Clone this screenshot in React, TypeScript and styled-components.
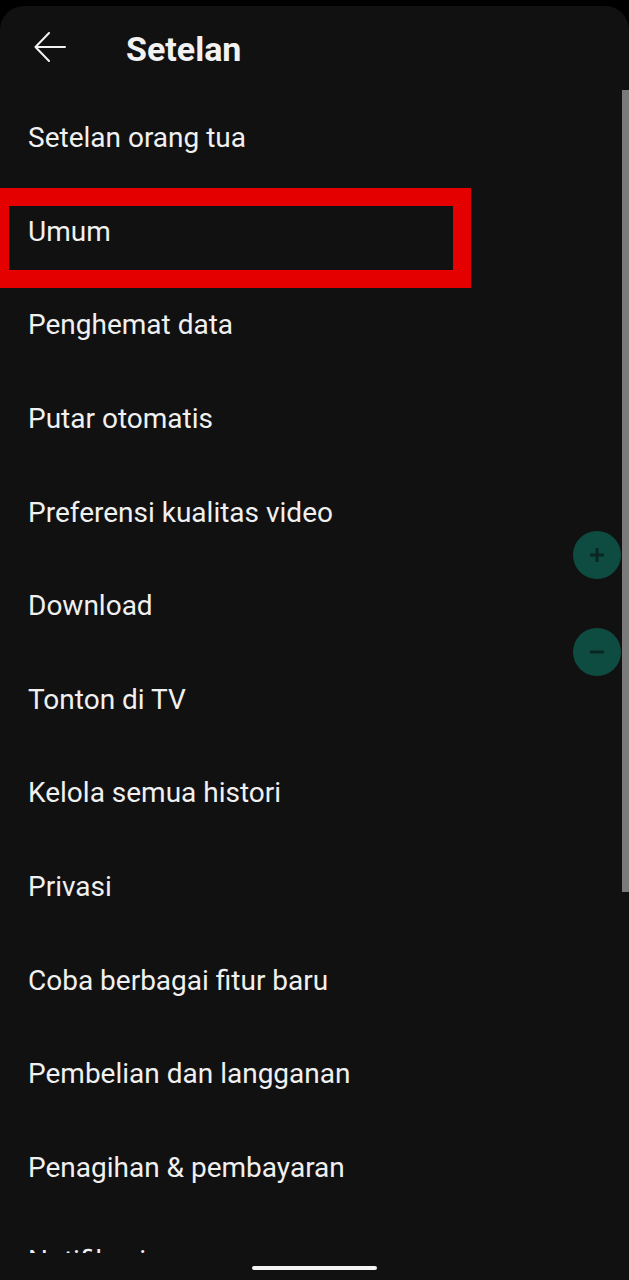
import styled, { createGlobalStyle } from "styled-components";

const GlobalStyle = createGlobalStyle`
  * {
    box-sizing: border-box;
  }
  body {
    margin: 0;
    background: #000;
    font-family: Roboto, "Noto Sans", "Liberation Sans", sans-serif;
  }
`;

const Screen = styled.div`
  position: relative;
  width: 629px;
  height: 1280px;
  padding-top: 6px;
  background: #000;
  overflow: hidden;
`;
const Sheet = styled.div`
  position: relative;
  display: flex;
  flex-direction: column;
  height: 1274px;
  background: #111111;
  border-radius: 24px 24px 0 0;
`;
const Header = styled.header`
  display: flex;
  align-items: center;
  height: 85px;
  padding: 0 0 4px 34px;
`;
const BackButton = styled.button`
  display: flex;
  align-items: center;
  justify-content: center;
  width: 32px;
  height: 30px;
  padding: 0;
  border: none;
  background: none;
  color: #f2f2f2;
`;
const Title = styled.h1`
  margin: 4px 0 0 60px;
  font-size: 34px;
  font-weight: 700;
  color: #f2f2f2;
`;
const List = styled.ul`
  flex: 1;
  margin: 0;
  padding: 0;
  list-style: none;
  overflow: hidden;
`;
const Row = styled.li`
  position: relative;
  display: flex;
  align-items: center;
  height: 93.6px;
  padding-left: 28px;
  font-size: 28px;
  color: #f0f0f0;
`;
const Highlight = styled.div`
  position: absolute;
  top: 3px;
  left: -9px;
  width: 480px;
  height: 100px;
  border: 18px solid #e50000;
  pointer-events: none;
`;
const NavArea = styled.div`
  display: flex;
  justify-content: center;
  height: 27px;
  padding-top: 13px;
`;
const HomeBar = styled.div`
  width: 125px;
  height: 4px;
  border-radius: 2px;
  background: #f5f5f5;
`;
const Scrollbar = styled.div`
  position: absolute;
  top: 84px;
  right: 0;
  width: 7px;
  height: 802px;
  background: #7a7a7a;
`;
const ZoomButton = styled.div<{ $top: number }>`
  position: absolute;
  top: ${(p) => p.$top}px;
  left: 573px;
  display: flex;
  align-items: center;
  justify-content: center;
  width: 48px;
  height: 48px;
  border-radius: 50%;
  background: #0e4c42;
`;

const items = [
  "Setelan orang tua",
  "Umum",
  "Penghemat data",
  "Putar otomatis",
  "Preferensi kualitas video",
  "Download",
  "Tonton di TV",
  "Kelola semua histori",
  "Privasi",
  "Coba berbagai fitur baru",
  "Pembelian dan langganan",
  "Penagihan & pembayaran",
  "Notifikasi",
];

const App = () => {
  return (
    <Screen>
      <GlobalStyle />
      <Sheet>
        <Header>
          <BackButton aria-label="Kembali">
            <svg width="32" height="30" viewBox="0 0 32 30" fill="none">
              <path
                d="M31 15H2M15 1L1.5 15L15 29"
                stroke="currentColor"
                strokeWidth="2"
                strokeLinecap="round"
                strokeLinejoin="round"
              />
            </svg>
          </BackButton>
          <Title>Setelan</Title>
        </Header>
        <List>
          {items.map((label) => (
            <Row key={label}>
              {label}
              {label === "Umum" && <Highlight />}
            </Row>
          ))}
        </List>
        <NavArea>
          <HomeBar />
        </NavArea>
        <Scrollbar />
      </Sheet>
      <ZoomButton $top={531}>
        <svg width="16" height="16" viewBox="0 0 16 16">
          <path d="M8 1v14M1 8h14" stroke="#0a2622" strokeWidth="3" />
        </svg>
      </ZoomButton>
      <ZoomButton $top={628}>
        <svg width="16" height="16" viewBox="0 0 16 16">
          <path d="M1 8h14" stroke="#0a2622" strokeWidth="3" />
        </svg>
      </ZoomButton>
    </Screen>
  );
};

export default App;
